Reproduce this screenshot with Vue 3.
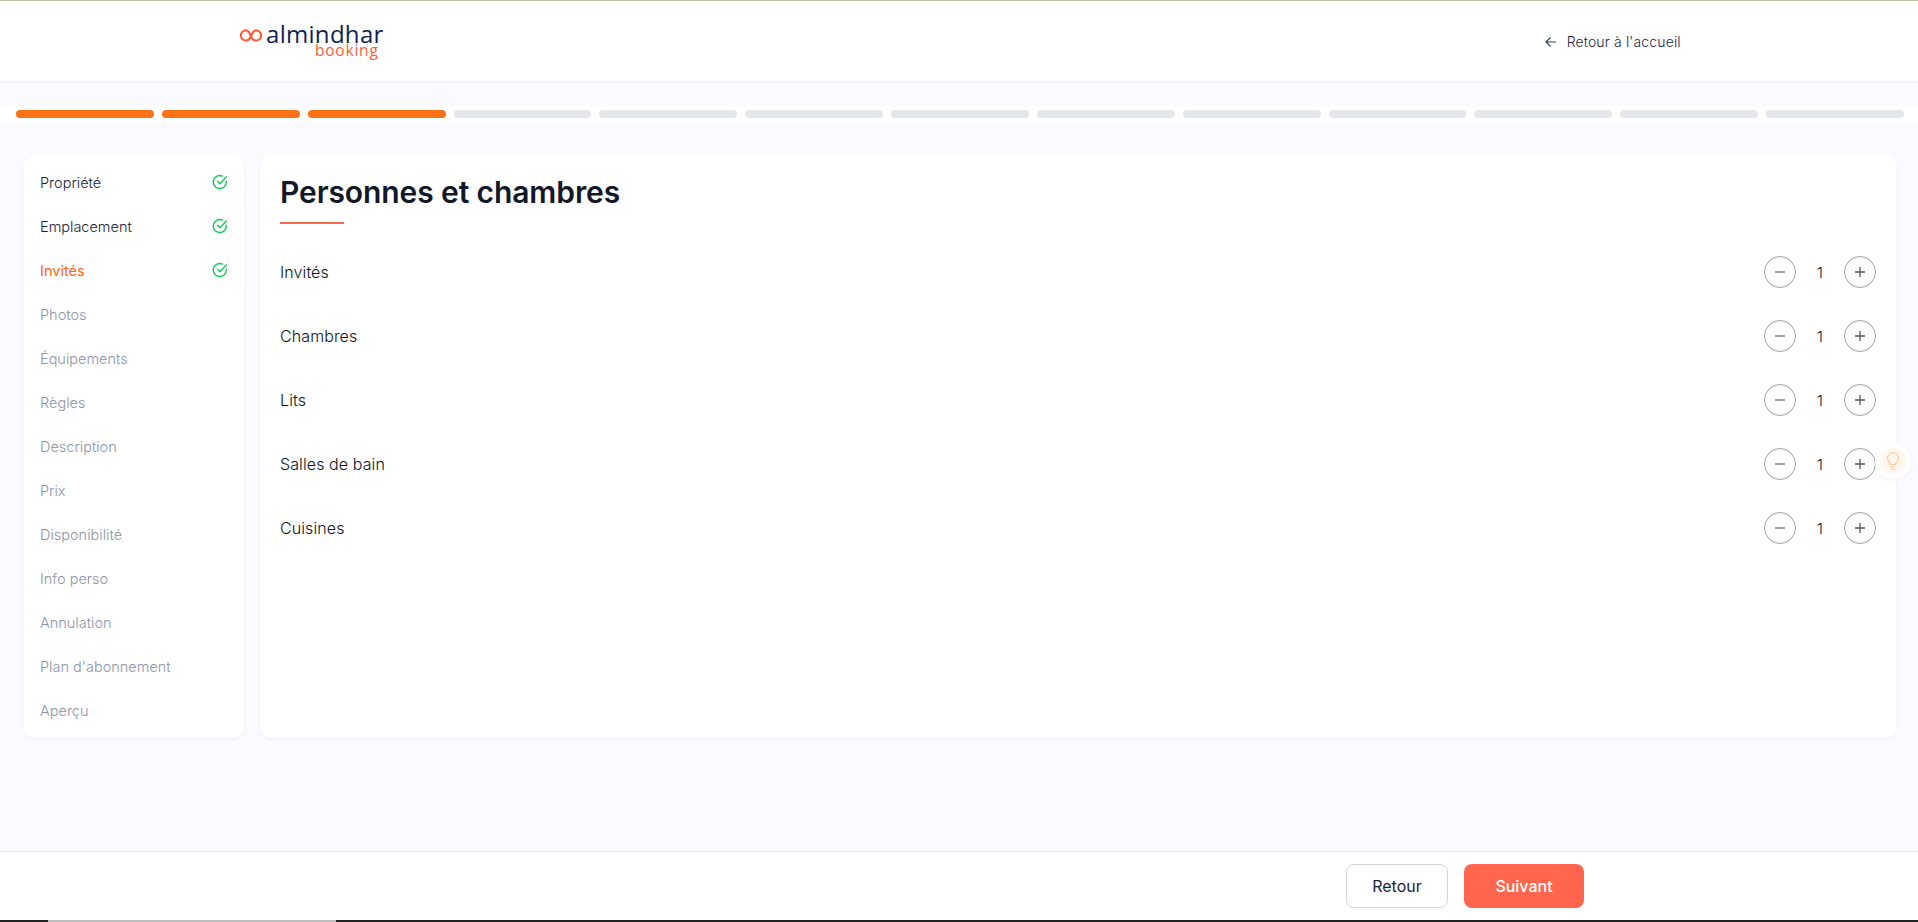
<script setup>
const bars = Array.from({ length: 13 }, (_, i) => i < 3)
const steps = [
  { label: 'Propriété', state: 'done' },
  { label: 'Emplacement', state: 'done' },
  { label: 'Invités', state: 'current' },
  { label: 'Photos', state: 'todo' },
  { label: 'Équipements', state: 'todo' },
  { label: 'Règles', state: 'todo' },
  { label: 'Description', state: 'todo' },
  { label: 'Prix', state: 'todo' },
  { label: 'Disponibilité', state: 'todo' },
  { label: 'Info perso', state: 'todo' },
  { label: 'Annulation', state: 'todo' },
  { label: "Plan d'abonnement", state: 'todo' },
  { label: 'Aperçu', state: 'todo' }
]
const counters = ['Invités', 'Chambres', 'Lits', 'Salles de bain', 'Cuisines']
</script>

<template>
  <div class="page">
    <header class="header">
      <div class="logo">
        <svg class="infinity" width="22" height="15" viewBox="0 0 24 16" fill="none" stroke="#ff5c39" stroke-width="2.400">
          <path d="M12 9.500C10.800 5.500 9.500 2.500 6.500 2.500A5.500 5.500 0 0 0 6.500 13.500C9 13.500 10.500 12 12 9.500C13.500 5 14.800 2.500 17.500 2.500A5.500 5.500 0 0 1 17.500 13.500C15 13.500 13.200 12 12 9.500Z" />
        </svg>
        <div class="logo-words">
          <span class="logo-name">almindhar</span>
          <span class="logo-sub">booking</span>
        </div>
      </div>
      <a class="home-link">
        <svg width="14" height="14" viewBox="0 0 14 14" fill="none" stroke="#3b4256" stroke-width="1.200">
          <path d="M12 7H2M6.500 2.500L2 7l4.500 4.500" />
        </svg>
        <span>Retour à l'accueil</span>
      </a>
    </header>

    <div class="progress">
      <span v-for="(on, i) in bars" :key="i" class="bar" :class="{ on }"></span>
    </div>

    <main class="content">
      <nav class="steps">
        <div v-for="s in steps" :key="s.label" class="step" :class="s.state">
          <span>{{ s.label }}</span>
          <svg v-if="s.state !== 'todo'" width="16" height="16" viewBox="0 0 16 16" fill="none" stroke="#16c75a" stroke-width="1.400" stroke-linecap="round" stroke-linejoin="round">
            <path d="M14.300 7.200V8A6.500 6.500 0 1 1 10.500 2.100" />
            <path d="M5.600 7.300L8 9.700l6.300-6.700" />
          </svg>
        </div>
      </nav>

      <section class="card">
        <h1 class="title">Personnes et chambres</h1>
        <div class="rule"></div>
        <div class="rows">
          <div v-for="c in counters" :key="c" class="row">
            <span class="row-label">{{ c }}</span>
            <div class="counter">
              <button class="round">
                <svg width="14" height="14" viewBox="0 0 14 14" stroke="#777" stroke-width="1.400"><path d="M2 7h10" /></svg>
              </button>
              <span class="value">1</span>
              <button class="round">
                <svg width="14" height="14" viewBox="0 0 14 14" stroke="#555" stroke-width="1.300"><path d="M2 7h10M7 2v10" /></svg>
              </button>
            </div>
          </div>
        </div>
      </section>
    </main>

    <footer class="footer">
      <button class="btn ghost">Retour</button>
      <button class="btn primary">Suivant</button>
    </footer>
    <div class="strip">
      <span class="strip-a"></span>
      <span class="strip-b"></span>
      <span class="strip-c"></span>
    </div>

    <div class="tip">
      <div class="tip-inner">
        <svg width="14" height="18" viewBox="0 0 14 18" fill="none" stroke="#ffc99a" stroke-width="1.200" stroke-linecap="round">
          <path d="M4.500 12.500C4.300 10.500 1.500 9.500 1.500 6.200A5.500 5.500 0 0 1 12.500 6.200C12.500 9.500 9.700 10.500 9.500 12.500Z" />
          <path d="M4.800 15h4.400M5.500 17h3" />
        </svg>
      </div>
    </div>
  </div>
</template>

<style>
html, body { margin: 0; background: #fbfaff; }
</style>

<style scoped>
.page {
  position: relative;
  height: 922px;
  overflow: hidden;
  display: flex;
  flex-direction: column;
  background: #fbfaff;
  font-family: Inter, "Liberation Sans", sans-serif;
  color: #1a2238;
}
.header {
  height: 81px;
  box-sizing: border-box;
  border-top: 1px solid #b4c4a0;
  background: #fff;
  box-shadow: 0 1px 3px rgba(20, 20, 60, 0.06);
  display: flex;
  align-items: flex-start;
  padding-left: 240px;
  position: relative;
}
.logo { display: flex; align-items: flex-start; margin-top: 23px; }
.infinity { margin-top: 4px; margin-right: 4px; }
.logo-words { display: flex; flex-direction: column; align-items: flex-end; }
.logo-name {
  font-family: "Open Sans", sans-serif;
  font-size: 24px;
  line-height: 20px;
  color: #101f56;
  letter-spacing: 0.300px;
}
.logo-sub {
  font-family: "Open Sans", sans-serif;
  font-size: 15.500px;
  line-height: 12px;
  color: #ff5c39;
  letter-spacing: 0.800px;
  margin-right: 5px;
}
.home-link {
  display: flex;
  align-items: center;
  gap: 9px;
  margin-left: 1160px;
  margin-top: 32px;
  font-size: 14px;
  font-weight: 300;
  letter-spacing: 0.140px;
  line-height: 18px;
  color: #1f2740;
}
.progress {
  margin-top: 25px;
  height: 16px;
  box-sizing: border-box;
  padding: 4px 14px 4px 16px;
  background: #fff;
  display: flex;
  gap: 8px;
}
.bar { flex: 1; height: 8px; border-radius: 4px; background: #e5e6ea; }
.bar.on { background: #fb7316; }
.content {
  display: flex;
  gap: 16px;
  padding: 32px 22px 0 24px;
  align-items: flex-start;
}
.steps {
  width: 220px;
  height: 584px;
  box-sizing: border-box;
  padding: 6px 16px;
  background: #fff;
  border-radius: 10px;
  box-shadow: 0 1px 3px rgba(20, 20, 60, 0.05);
}
.step {
  height: 44px;
  display: flex;
  align-items: center;
  justify-content: space-between;
  font-size: 14.500px;
  font-weight: 300;
  color: #1a2238;
}
.step.current { color: #ff6414; font-weight: 400; }
.step.todo { color: #8d94a6; }
.card {
  flex: 1;
  height: 584px;
  box-sizing: border-box;
  padding: 18px 20px;
  background: #fff;
  border-radius: 10px;
  box-shadow: 0 1px 3px rgba(20, 20, 60, 0.05);
}
.title {
  margin: 0;
  font-size: 30px;
  line-height: 40px;
  font-weight: 600;
  letter-spacing: -0.100px;
  color: #111827;
}
.rule { width: 64px; height: 2px; background: #ff664d; margin-top: 10px; }
.rows { margin-top: 16px; display: flex; flex-direction: column; }
.row {
  height: 64px;
  display: flex;
  align-items: center;
  justify-content: space-between;
}
.row-label { font-size: 16px; font-weight: 300; letter-spacing: 0.100px; color: #0b1220; }
.counter { display: flex; align-items: center; }
.round {
  width: 32px;
  height: 32px;
  padding: 0;
  border: 1px solid #9aa1b0;
  border-radius: 50%;
  background: #fff;
  display: flex;
  align-items: center;
  justify-content: center;
}
.value { width: 48px; text-align: center; font-size: 15px; font-weight: 300; color: #0b1220; }
.footer {
  margin-top: auto;
  height: 69px;
  box-sizing: border-box;
  border-top: 1px solid #e5e6ea;
  background: #fff;
  display: flex;
  gap: 16px;
  padding: 12px 0 0 1346px;
}
.btn {
  height: 44px;
  border-radius: 8px;
  font-family: inherit;
  font-size: 16px;
  font-weight: 400;
}
.ghost { width: 102px; background: #fff; border: 1px solid #d2d4dc; color: #1a2238; }
.primary { width: 120px; background: #ff664d; border: 0; color: #fff; font-weight: 500; }
.strip { height: 2px; display: flex; background: #222; }
.strip-a { width: 48px; }
.strip-b { width: 288px; background: #bdbdbd; }
.strip-c { flex: 1; }
.tip {
  position: absolute;
  left: 1875px;
  top: 443px;
  width: 36px;
  height: 36px;
  border-radius: 50%;
  background: #fff;
  box-shadow: 0 1px 4px rgba(20, 20, 60, 0.05);
  display: flex;
  align-items: center;
  justify-content: center;
}
.tip-inner {
  width: 26px;
  height: 26px;
  border-radius: 50%;
  background: #fff6ee;
  display: flex;
  align-items: center;
  justify-content: center;
}
</style>
